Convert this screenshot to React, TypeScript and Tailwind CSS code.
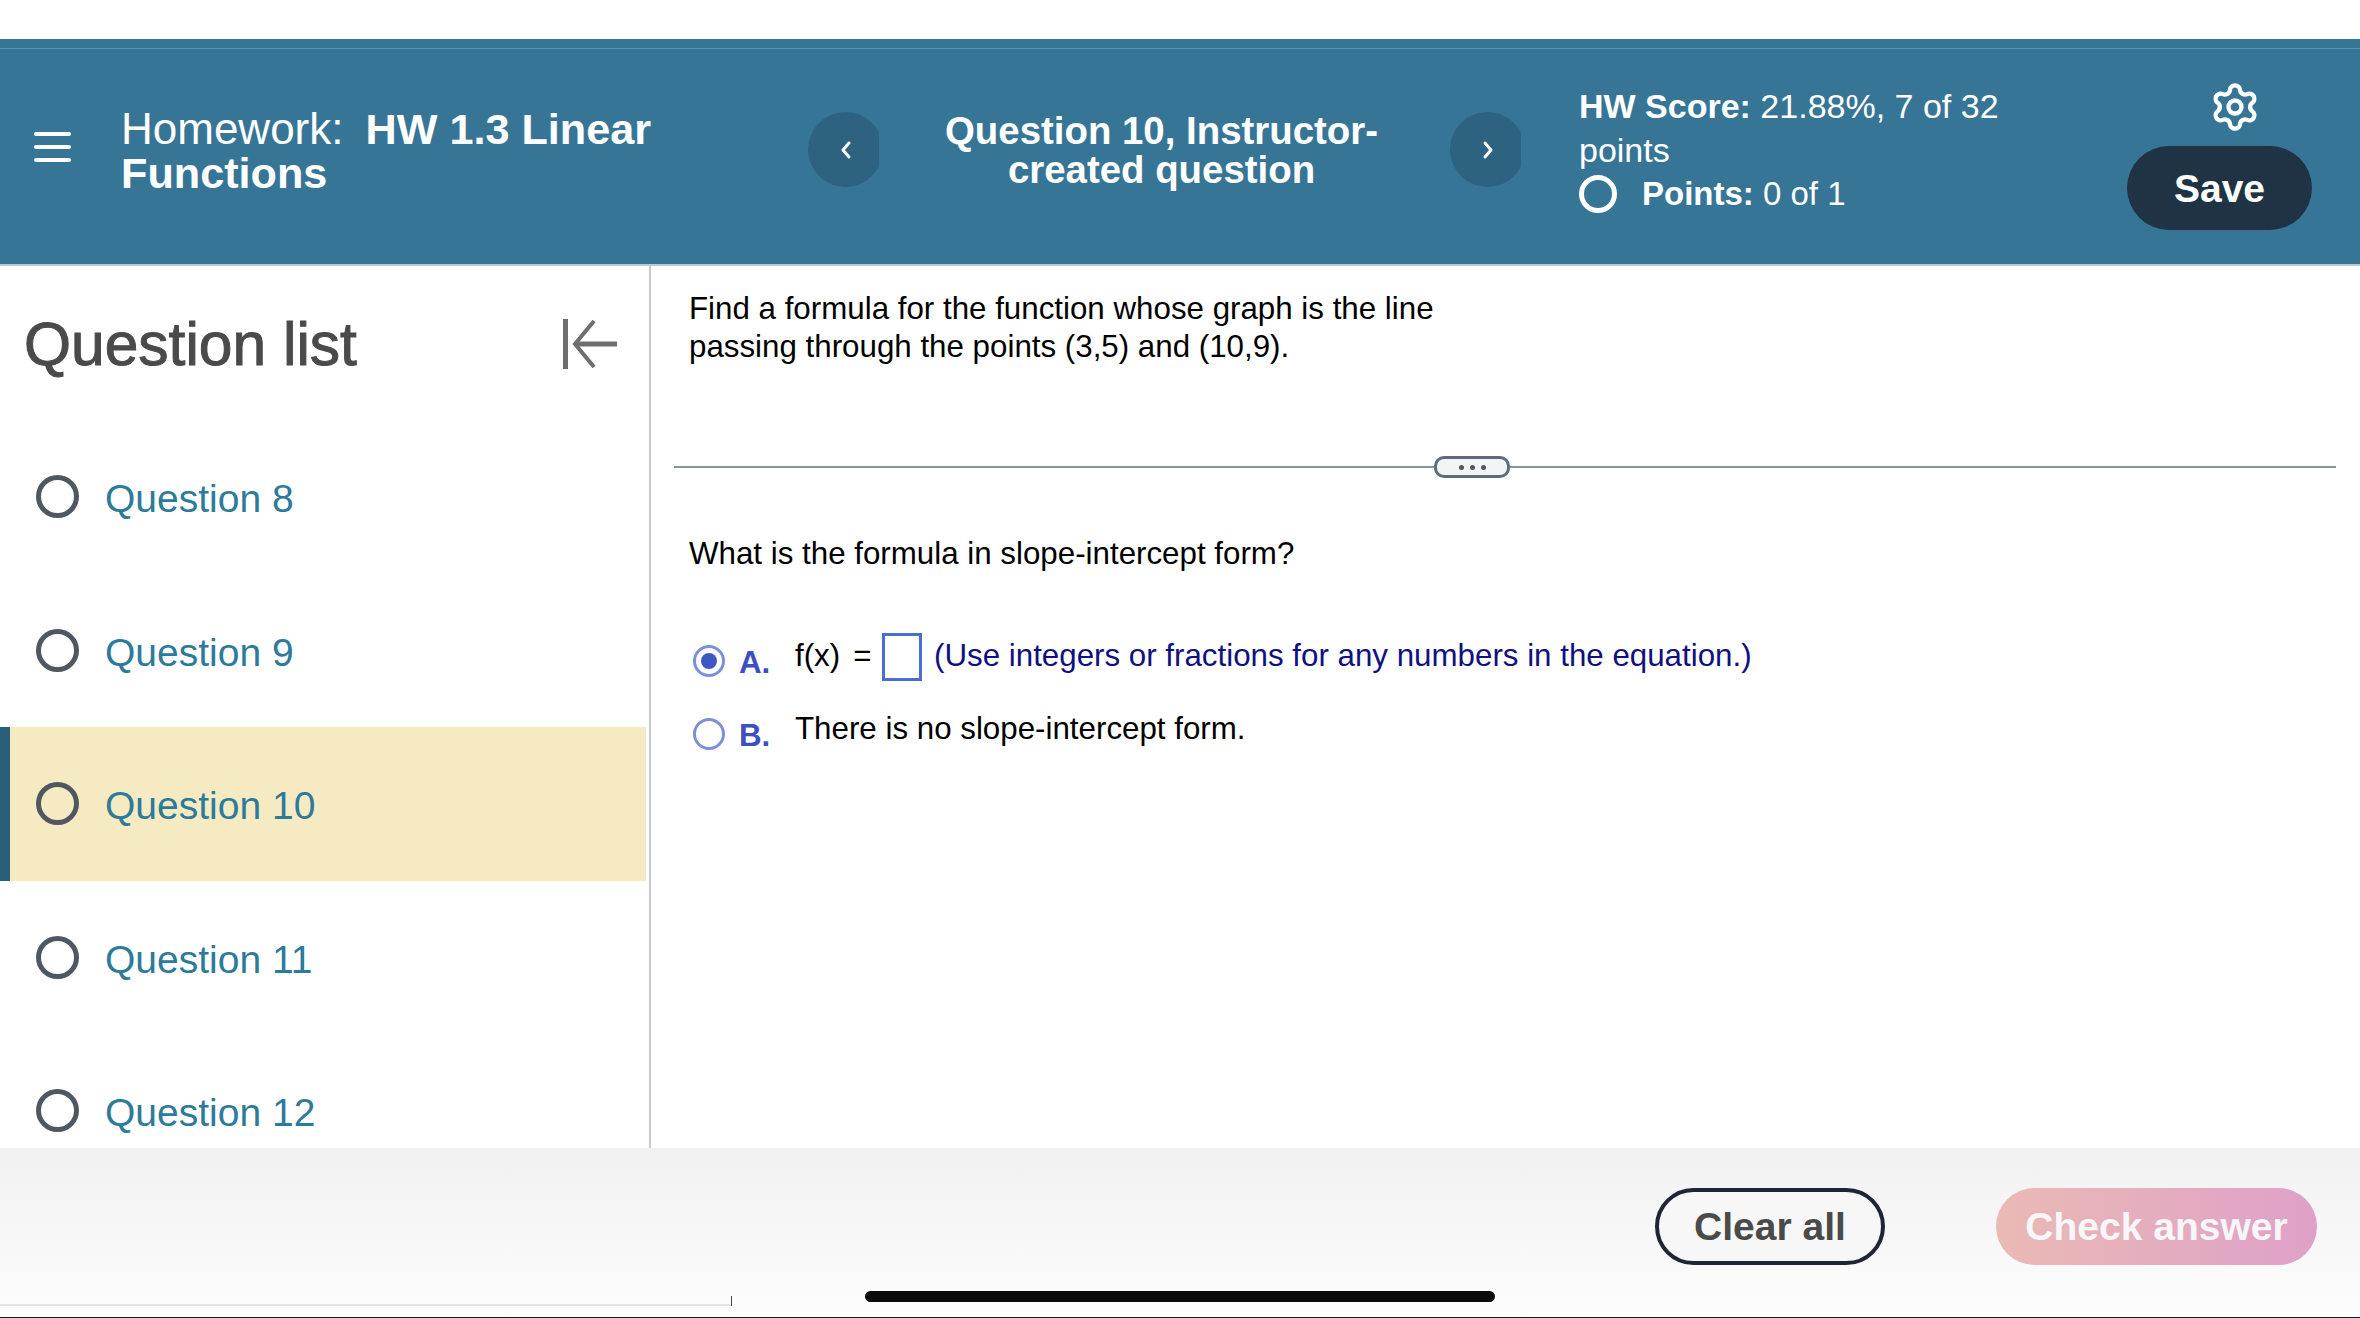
import { Settings } from "lucide-react";

const questions = [8, 9, 10, 11, 12];

function RingIcon({ active }: { active?: boolean }) {
  return (
    <span
      className={
        "block size-[43px] shrink-0 rounded-full border-[5px] border-[#4f5760] " +
        (active ? "bg-transparent" : "bg-white")
      }
    />
  );
}

function QuestionRow({ num }: { num: number }) {
  const active = num === 10;
  return (
    <div
      className={
        "flex h-[153.5px] shrink-0 items-center gap-[26px] pl-[36px] " +
        (active ? "mr-[3px] border-l-[10px] border-[#2a5f7a] bg-[#f6eac2] !pl-[26px]" : "")
      }
    >
      <RingIcon active={active} />
      <span className="pt-[5px] text-[39px] text-[#2e7a9a]">Question {num}</span>
    </div>
  );
}

function NavButton({ dir }: { dir: "prev" | "next" }) {
  return (
    <button className="flex h-[75px] w-[71px] shrink-0 items-center justify-start overflow-hidden">
      <span className="flex h-[75px] w-[75px] shrink-0 items-center justify-center rounded-full bg-[#2d6280]">
        <svg width="14" height="20" viewBox="0 0 14 20" fill="none" stroke="white" strokeWidth="3" strokeLinecap="round" strokeLinejoin="round">
          {dir === "prev" ? <path d="M10 3 L4 10 L10 17" /> : <path d="M4 3 L10 10 L4 17" />}
        </svg>
      </span>
    </button>
  );
}

export default function App() {
  return (
    <div className="flex h-[1318px] w-[2360px] flex-col overflow-hidden bg-white font-['Liberation_Sans',Arial,sans-serif]">
      <div className="h-[39px] shrink-0 bg-white" />

      {/* header */}
      <header className="relative flex h-[227px] shrink-0 items-start border-b-2 border-[#b9c9d8] bg-[#367596] text-white">
        <div className="absolute inset-x-0 top-[9px] h-px bg-[#5c93ad]" />
        <div className="mt-[93px] ml-[34px] flex h-[30px] w-[37px] shrink-0 flex-col justify-between">
          <span className="h-[4px] rounded-full bg-white" />
          <span className="h-[4px] rounded-full bg-white" />
          <span className="h-[4px] rounded-full bg-white" />
        </div>
        <h1 className="mt-[68px] ml-[50px] w-[679px] shrink-0 text-[43.2px] leading-[44px] font-bold">
          <span className="mr-[10px] text-[44px] font-normal">Homework:</span> HW 1.3 Linear
          <br />
          Functions
        </h1>
        <div className="mt-[73px] ml-[8px]">
          <NavButton dir="prev" />
        </div>
        <div className="mt-[72px] w-[571px] shrink-0 pr-[6px] text-center text-[38.4px] leading-[39px] font-bold">
          <div>Question 10, Instructor-</div>
          <div>created question</div>
        </div>
        <div className="mt-[73px]">
          <NavButton dir="next" />
        </div>
        <div className="mt-[46px] ml-[58px] w-[548px] shrink-0 text-[34px] leading-[43.5px]">
          <div>
            <b>HW Score:</b> 21.88%, 7 of 32
          </div>
          <div>points</div>
          <div className="flex items-center gap-[25px] text-[33px]">
            <span className="size-[38px] rounded-full border-[5px] border-white" />
            <span>
              <b>Points:</b> 0 of 1
            </span>
          </div>
        </div>
        <div className="mt-[42px] flex w-[185px] shrink-0 flex-col items-center">
          <Settings className="ml-[30px] size-[52px]" strokeWidth={2} />
          <button className="mt-[13px] flex h-[84px] w-[185px] items-center justify-center rounded-full bg-[#1f3344] pt-[2px] text-[39px] font-bold">
            Save
          </button>
        </div>
      </header>

      {/* main */}
      <main className="flex h-[882px] shrink-0 overflow-hidden">
        <aside className="flex w-[651px] shrink-0 flex-col overflow-hidden border-r-2 border-[#c5c9d0]">
          <div className="flex h-[154px] shrink-0 items-center justify-between pr-[32px] pl-[24px]">
            <h2 className="pt-[3px] text-[60.5px] text-[#4a4a4a] [-webkit-text-stroke:1px_#4a4a4a]">Question list</h2>
            <svg width="54" height="50" viewBox="0 0 54 50" fill="none" stroke="#6e6e6e" strokeWidth="5" className="mt-[2px]">
              <path d="M2.5 0 V50" />
              <path d="M54 25 H13" />
              <path d="M31 2 L12 25 L31 48" strokeWidth="4" />
            </svg>
          </div>
          {questions.map((q) => (
            <QuestionRow key={q} num={q} />
          ))}
        </aside>

        <section className="min-w-0 flex-1 pt-[24px] text-[31.3px] leading-[38px] text-black">
          <p className="ml-[38px] w-[780px]">
            Find a formula for the function whose graph is the line passing through the points (3,5) and (10,9).
          </p>
          <div className="relative mt-[100px] mr-[24px] ml-[23px] h-[2px] bg-[#8a93a0]">
            <span className="absolute top-[-10px] left-[760px] flex h-[22px] w-[76px] items-center justify-center gap-[6px] rounded-[10px] border-[3px] border-[#5f6b78] bg-[#f2f4f6]">
              <i className="size-[5px] rounded-full bg-[#4f5760]" />
              <i className="size-[5px] rounded-full bg-[#4f5760]" />
              <i className="size-[5px] rounded-full bg-[#4f5760]" />
            </span>
          </div>
          <p className="mt-[67px] ml-[38px]">What is the formula in slope-intercept form?</p>

          <div className="mt-[60px] ml-[42px] flex items-start">
            <span className="mt-[12px] flex size-[32px] shrink-0 items-center justify-center rounded-full border-[3px] border-[#7b8fdb] bg-white">
              <i className="size-[16px] rounded-full bg-[#3e57c4]" />
            </span>
            <span className="mt-[11px] ml-[14px] w-[56px] shrink-0 font-bold text-[#3d4fbf]">A.</span>
            <span className="mt-[4px] flex w-[87px] shrink-0 gap-[13px]">
              <span>f(x)</span>
              <span>=</span>
            </span>
            <span className="h-[48px] w-[40px] shrink-0 border-[3px] border-[#4a6fd0] bg-white" />
            <span className="mt-[4px] ml-[12px] whitespace-nowrap text-[#10107f]">
              (Use integers or fractions for any numbers in the equation.)
            </span>
          </div>
          <div className="mt-[27px] ml-[42px] flex items-start">
            <span className="mt-[9px] size-[32px] shrink-0 rounded-full border-[3px] border-[#7b8fdb] bg-white" />
            <span className="mt-[8px] ml-[14px] w-[56px] shrink-0 font-bold text-[#3d4fbf]">B.</span>
            <span className="mt-[1px]">There is no slope-intercept form.</span>
          </div>
        </section>
      </main>

      {/* footer */}
      <footer className="relative flex h-[170px] shrink-0 items-start justify-end bg-gradient-to-b from-[#f1f1f1] to-[#fdfdfd] pt-[40px] pr-[43px]">
        <button className="flex h-[77px] w-[230px] items-center justify-center rounded-full border-[4px] border-[#1f2533] bg-[#f7f7f7] pt-[2px] text-[39px] font-bold text-[#4a4a4a]">
          Clear all
        </button>
        <button className="ml-[111px] flex h-[77px] w-[321px] items-center justify-center rounded-full bg-gradient-to-r from-[#eabab4] to-[#dfa0c8] pt-[2px] text-[39px] font-bold text-[#f8f6f8]">
          Check answer
        </button>
        <div className="absolute bottom-[12px] left-0 h-[2px] w-[731px] bg-[#e4e4e4]" />
        <div className="absolute bottom-[12px] left-[731px] h-[10px] w-px bg-[#444]" />
        <div className="absolute bottom-[16px] left-[865px] h-[11px] w-[630px] rounded-full bg-[#0a0a0a]" />
        <div className="absolute inset-x-0 bottom-0 h-px bg-[#1a1a1a]" />
      </footer>
    </div>
  );
}
